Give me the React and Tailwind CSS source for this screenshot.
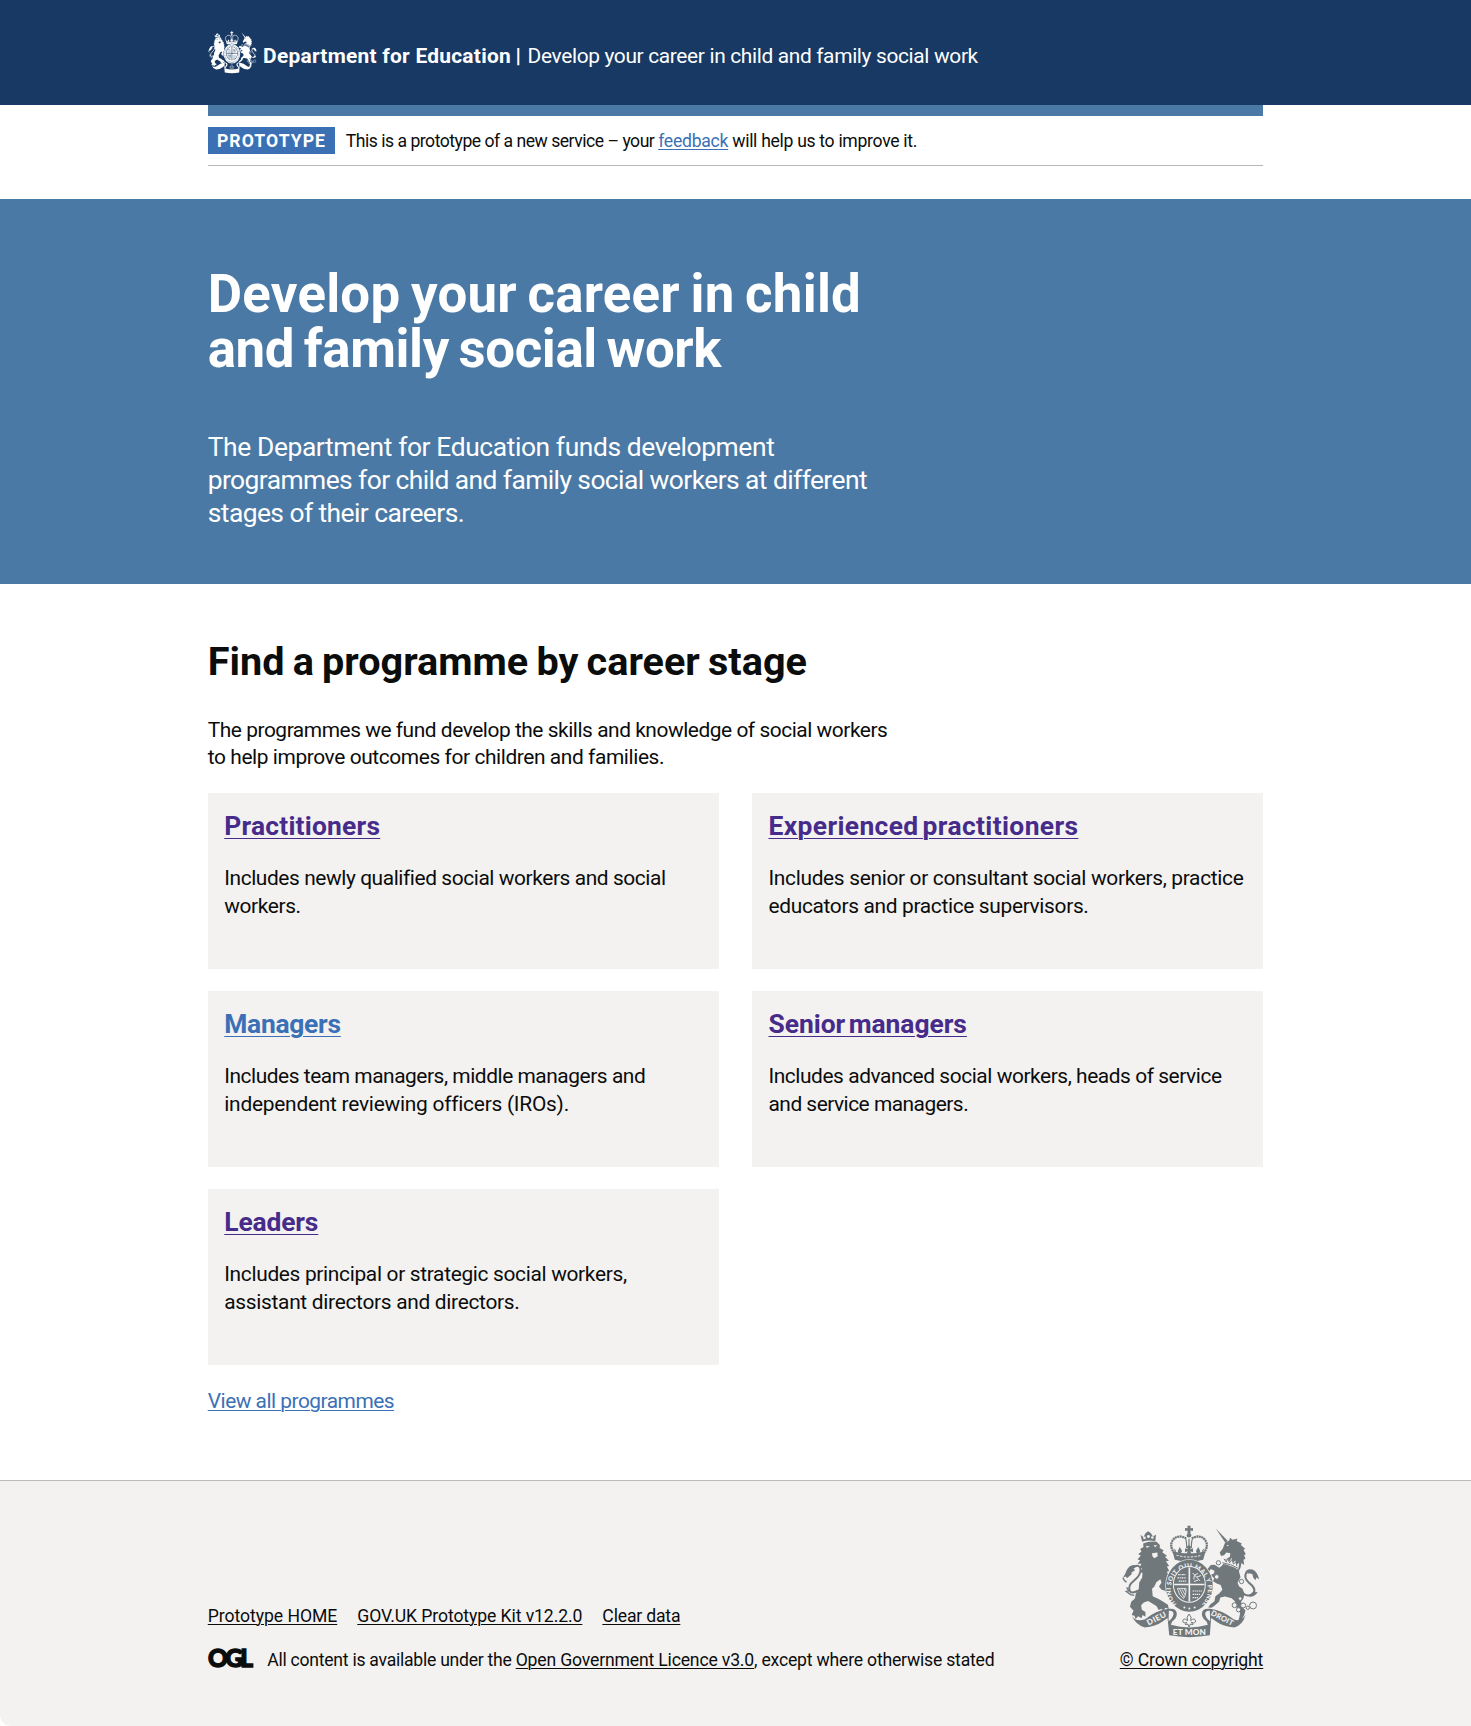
import React from 'react';

const garterText = { fontFamily: 'Lato, sans-serif', fontWeight: 900 };

function Crest({ className, ink, paper, lettering = true, id }) {
  const line = { fill: 'none', stroke: ink };
  return (
    <svg viewBox="66 42 418 344" preserveAspectRatio="none" className={className} fill={ink} aria-hidden="true">
      {/* lion */}
      <path d="M127 93 L122 72 L131 79 L137 67 L145 61 L153 66 L160 77 L169 71 L167 91 Q147 86 127 93Z" />
      <g fill={paper}>
        <circle cx="134" cy="81" r="4" /><circle cx="146" cy="77" r="4.5" /><circle cx="158" cy="80" r="4" />
      </g>
      <path d="M130 98 Q148 90 171 93 L181 104 L180 112 L192 119 L188 125 L203 136 L196 139 L208 151 L199 152 L209 167 L202 168 L209 182 L202 184 L206 193 Q213 200 212 208 L218 217 L205 216 L207 226 L216 232 L213 241 L224 249 L232 262 L222 261 L225 272 L207 262 Q201 255 198 243 L185 238 L178 229 L186 217 L182 207 L170 216 L164 229 L157 236 L159 259 L177 267 L191 276 L205 285 L208 298 L197 294 L193 303 L185 298 L177 301 L171 289 L153 278 L145 273 L132 278 L124 286 L126 300 L137 307 L137 321 L128 316 L125 326 L115 320 L107 328 L104 318 L95 316 L101 303 L90 291 L94 276 L105 266 L108 250 L117 235 L118 218 L127 202 L128 188 L122 185 L127 173 L118 173 L125 160 L113 160 L121 149 L113 147 L123 135 L115 131 L125 123 L121 115 L131 109Z" />
      <path d="M157 128 L173 126 L174 137 L164 143 L158 137Z M139 105 L151 108 L140 111Z M162 104 L173 104 L166 110Z" fill={paper} />
      <path d="M114 242 Q94 254 89 241 Q84 226 102 212 Q124 193 122 176 Q118 160 103 170 Q86 178 79 197" strokeWidth="6" {...line} />
      <path d="M69 202 Q76 193 80 180 Q88 163 107 164 L100 175 L106 179 L94 187 L96 191 L81 204 L78 199Z" />
      <path d="M69 202 Q72 213 80 216 M80 232 L87 243 L79 244 L92 254 L103 256" strokeWidth="4" {...line} />

      {/* unicorn */}
      <path d="M350 53 L386 90 L379 96Z" />
      <path d="M378 96 L391 89 L393 81 L401 87 L416 83 L413 91 L429 98 L426 103 L439 114 L434 118 L441 130 L436 134 L440 145 L434 148 L436 164 L428 158 L425 172 L420 182 L425 201 L416 218 L421 229 L431 236 L437 251 L434 265 L427 276 L429 290 L440 302 L436 316 L427 332 L419 345 L407 352 L410 342 L420 329 L424 310 L412 292 L408 274 L398 265 L378 260 L364 263 L360 276 L346 288 L337 294 L327 293 L333 284 L346 274 L349 259 L362 249 L370 239 L365 225 L353 220 L342 213 L345 204 L335 194 L345 189 L346 181 L335 176 L330 184 L323 178 L335 164 L346 163 L361 172 L371 164 L374 150 L393 139 L394 128 L382 126 L375 134 L366 136 L362 126 L371 114Z" />
      <path d="M383 103 L390 103 L386 107Z" fill={paper} />
      <path d="M374 142 L381 151 L385 139 L391 153 L398 142 L402 156 L410 150 L412 163 L421 158 L418 178 Q395 164 369 160Z" fill={paper} />
      <path d="M370 157 Q396 160 418 174 M375 145 L382 155 L386 144 L392 157 L399 147 L404 161 L411 154 L414 167" strokeWidth="3" {...line} />
      <path d="M431 248 Q448 266 466 247 Q471 234 452 219 Q433 203 443 185 Q456 170 473 199" strokeWidth="6" {...line} />
      <path d="M444 190 Q450 176 463 178 Q477 185 481 207 L472 202 L471 210 L464 203 L461 192 L455 190Z M450 260 Q468 262 477 246 L470 247 L468 239 L458 251Z" />
      <g fill={paper} stroke={ink} strokeWidth="3">
        <circle cx="358" cy="157" r="6.5" /><circle cx="353" cy="200" r="7" /><circle cx="428" cy="214" r="6.5" />
        <circle cx="424" cy="266" r="5.5" /><circle cx="407" cy="286" r="7.5" /><circle cx="419" cy="300" r="6.5" />
        <circle cx="433" cy="287" r="7.5" /><circle cx="447" cy="294" r="5" /><circle cx="463" cy="287" r="10.5" />
      </g>

      {/* ribbon */}
      <path d="M96 319 Q108 338 136 329 Q170 301 207 297 Q232 294 232 313 Q232 326 218 336 L214 346 Q270 362 326 346 L322 336 Q308 326 308 313 Q308 294 333 297 Q370 301 404 329 Q426 338 440 316 Q432 347 406 354 Q373 352 350 335 L336 325 L332 378 Q270 389 209 378 L204 325 L190 335 Q167 352 135 354 Q108 346 96 319Z" />
      <path d="M208 303 Q223 302 222 314 Q219 328 207 335Z M332 303 Q317 302 318 314 Q321 328 333 335Z" fill={paper} />
      {lettering && (
        <g fill={paper} style={garterText} textAnchor="middle">
          <text transform="translate(174 334) rotate(-27)" fontSize="24" textLength="62">DIEU</text>
          <text x="270" y="377" fontSize="25" textLength="100">ET MON</text>
          <text transform="translate(366 332) rotate(27)" fontSize="23" textLength="74">DROIT</text>
        </g>
      )}
      <path d="M269 313 Q259 323 265 333 Q252 323 250 334 Q252 344 262 338 L258 345 L266 344 L269 353 L273 344 L281 345 L276 338 Q287 344 289 334 Q286 323 274 333 Q279 323 269 313Z" fill={paper} stroke={ink} strokeWidth="3" />

      {/* crown */}
      <path d="M264 44 h10 l-1 8 8 -1 v9 l-8 -1 1 8 h-10 l1 -8 -8 1 v-9 l8 1Z" />
      <circle cx="269" cy="73" r="7" />
      <path d="M225 128 Q208 106 220 88 Q234 69 262 83 M313 128 Q330 106 318 88 Q304 69 276 83" strokeWidth="7" strokeDasharray="6 1.5" {...line} />
      <path d="M258 82 Q262 90 262 112 M280 82 Q276 90 276 112 M269 84 V108" strokeWidth="3.5" {...line} />
      <path d="M262 109 l7 -6 7 6 -3 7 8 -3 v12 l-8 -3 3 8 h-14 l3 -8 -8 3 v-12 l8 3Z M235 121 l6 -12 7 12 -4 8 h-7Z M290 121 l7 -12 6 12 -3 8 h-7Z M222 113 l7 6 v10Z M316 113 l-7 6 v10Z" />
      <path d="M219 122 Q269 136 319 122 L312 148 Q269 160 226 148Z" />
      <path d="M231 134 Q269 145 307 134" fill="none" stroke={paper} strokeWidth="3" strokeDasharray="7 4" />

      {/* garter and shield */}
      <ellipse cx="270" cy="227" rx="73" ry="81" fill={paper} />
      <ellipse cx="270" cy="227" rx="71" ry="79" />
      <path id={id} d="M231 284 A56 65 0 1 1 309 284" fill="none" />
      {lettering ? (
        <text fill={paper} style={garterText} fontSize="19">
          <textPath href={`#${id}`} textLength="292">HONI SOIT QUI MAL Y PENSE</textPath>
        </text>
      ) : (
        <ellipse cx="270" cy="227" rx="60" ry="68" fill="none" stroke={paper} strokeWidth="4" strokeDasharray="7 6" />
      )}
      <g fill={paper}>
        <circle cx="255" cy="293" r="3" /><circle cx="270" cy="296" r="3" /><circle cx="286" cy="293" r="3" />
      </g>
      <ellipse cx="270" cy="223" rx="50" ry="56" fill={paper} />
      <ellipse cx="270" cy="223" rx="47" ry="53" />
      <path d="M270 171 V275 M224 223 H316" stroke={paper} strokeWidth="5" />
      <path d="M236 193 h24 M234 203 h26 M238 213 h22 M280 243 h28 M280 253 h24 M280 263 h16" stroke={paper} strokeWidth="3.5" strokeDasharray="5 2 3 2" />
      <path d="M280 188 L302 212 M284 208 Q282 192 296 190 M293 200 l12 -4 M284 214 l12 -4" fill="none" stroke={paper} strokeWidth="3" />
      <path d="M234 235 H260 Q260 258 252 266 Q238 256 234 235Z M240 236 L254 262 M247 236 L257 255 M254 236 L259 245" fill="none" stroke={paper} strokeWidth="2.5" />
    </svg>
  );
}

function Link({ children, className = '' }) {
  return (
    <a href="#" className={`underline decoration-1 underline-offset-[0.1em] ${className}`}>
      {children}
    </a>
  );
}

const visited = 'text-[#472b8a]';
const blue = 'text-[#3b70b6]';

const cards = [
  { title: 'Practitioners', tone: visited, track: 'tracking-[0.22px]', lines: [['Includes newly qualified social workers and social', 'tracking-[-0.41px]'], ['workers.', 'tracking-[-0.39px]']] },
  { title: 'Experienced practitioners', tone: visited, track: 'tracking-[0.38px] [word-spacing:-3px]', lines: [['Includes senior or consultant social workers, practice', 'tracking-[-0.32px]'], ['educators and practice supervisors.', 'tracking-[-0.33px]']] },
  { title: 'Managers', tone: blue, track: 'tracking-[-0.27px]', lines: [['Includes team managers, middle managers and', 'tracking-[-0.45px]'], ['independent reviewing officers (IROs).', 'tracking-[-0.24px]']] },
  { title: 'Senior managers', tone: visited, track: 'tracking-[-0.03px] [word-spacing:-3px]', lines: [['Includes advanced social workers, heads of service', 'tracking-[-0.43px]'], ['and service managers.', 'tracking-[-0.5px]']] },
  { title: 'Leaders', tone: visited, track: 'tracking-[-0.14px]', lines: [['Includes principal or strategic social workers,', 'tracking-[-0.32px]'], ['assistant directors and directors.', 'tracking-[-0.30px]']] },
];

function Card({ title, tone, track, lines }) {
  return (
    <div className="h-[175.6px] bg-[#f3f2f1] px-[16.5px] pt-[16.5px]">
      <h3 className={`text-[26.4px] leading-[33px] font-bold ${track}`}>
        <Link className={tone}>{title}</Link>
      </h3>
      <p className="mt-[22.4px] text-[20.9px] leading-[27.5px] whitespace-nowrap">
        {lines.map(([text, spacing]) => (
          <span key={text} className={`block ${spacing}`}>{text}</span>
        ))}
      </p>
    </div>
  );
}

export default function App() {
  return (
    <div className="min-h-[1726px] w-full bg-white font-['Roboto',sans-serif] text-[#0b0c0c]">
      <header className="h-[104.7px] bg-[#173963] text-white">
        <div className="mx-auto flex w-[1055.5px] pt-[31px]">
          <Crest id="garter-header" className="h-[42.5px] w-[49px]" ink="#ffffff" paper="#173963" lettering={false} />
          <div className="ml-[6.3px] flex pt-[12px] text-[20.9px] leading-[27.5px] whitespace-nowrap">
            <span className="w-[252.5px] font-bold tracking-[0.26px]">Department for Education</span>
            <span className="w-[12px] font-black">|</span>
            <span className="tracking-[-0.34px]">Develop your career in child and family social work</span>
          </div>
        </div>
      </header>

      <div className="mx-auto h-[94.6px] w-[1055.5px]">
        <div className="h-[11px] bg-[#4b79a5]" />
        <div className="flex h-[50.3px] items-start border-b border-[#b4b8bb] pt-[11px] text-[17.6px]">
          <strong className="flex h-[27.4px] w-[127.5px] items-center justify-center bg-[#3b70b5] pt-px font-bold tracking-[1.05px] text-white">PROTOTYPE</strong>
          <p className="ml-[10.5px] pt-[3px] leading-[22px] whitespace-nowrap">
            <span className="tracking-[-0.49px]">This is a prototype of a new service – your </span>
            <Link className="tracking-[-0.26px] text-[#3b70b6]">feedback</Link>
            <span className="tracking-[-0.31px]"> will help us to improve it.</span>
          </p>
        </div>
      </div>

      <section className="h-[384.8px] bg-[#4b79a5] text-white">
        <div className="mx-auto w-[1055.5px] pt-[68px] whitespace-nowrap">
          <h1 className="text-[52.8px] leading-[55px] font-bold">
            <span className="block tracking-[0.25px] [word-spacing:-2.8px]">Develop your career in child</span>
            <span className="block tracking-[-0.4px] [word-spacing:-3px]">and family social work</span>
          </h1>
          <p className="mt-[54px] text-[26.4px] leading-[33px]">
            <span className="block tracking-[-0.4px]">The Department for Education funds development</span>
            <span className="block tracking-[-0.57px]">programmes for child and family social workers at different</span>
            <span className="block tracking-[-0.56px]">stages of their careers.</span>
          </p>
        </div>
      </section>

      <main className="mx-auto h-[896.2px] w-[1055.5px] pt-[56.4px]">
        <h2 className="text-[39.6px] leading-[44px] font-bold tracking-[0px] [word-spacing:-1.6px]">Find a programme by career stage</h2>
        <p className="mt-[32.3px] text-[20.9px] leading-[27.5px] whitespace-nowrap">
          <span className="block tracking-[-0.45px]">The programmes we fund develop the skills and knowledge of social workers</span>
          <span className="block tracking-[-0.4px]">to help improve outcomes for children and families.</span>
        </p>
        <div className="mt-[21.5px] grid grid-cols-2 gap-x-[33px] gap-y-[22.4px]">
          {cards.map((card) => <Card key={card.title} {...card} />)}
        </div>
        <p className="mt-[22.8px] text-[20.9px] leading-[27.5px] tracking-[-0.5px]">
          <Link className="text-[#3b70b6]">View all programmes</Link>
        </p>
      </main>

      <footer className="h-[245.7px] rounded-bl-[11px] border-t border-[#b9bbbc] bg-[#f3f2f1]">
        <div className="mx-auto flex w-[1055.5px] items-end justify-between pt-[43.5px] text-[17.6px] leading-[22px] whitespace-nowrap">
          <div>
            <div className="flex gap-[20px]">
              <Link className="tracking-[-0.05px]">Prototype HOME</Link>
              <Link className="tracking-[-0.09px]">GOV.UK Prototype Kit v12.2.0</Link>
              <Link className="tracking-[-0.18px]">Clear data</Link>
            </div>
            <div className="mt-[22px] flex">
              <svg viewBox="0 0 45 20" className="h-[20px] w-[45px] overflow-visible" aria-label="Open Government Licence">
                <text x="0" y="18.2" textLength="45" lengthAdjust="spacing" fontSize="24.5" fontWeight="900" fill="#0b0c0c" stroke="#0b0c0c" strokeWidth="1.3" style={{ fontFamily: 'Lato, sans-serif' }}>OGL</text>
              </svg>
              <p className="ml-[14.5px]">
                <span className="tracking-[-0.26px]">All content is available under the </span>
                <Link className="tracking-[-0.17px]">Open Government Licence v3.0</Link>
                <span className="tracking-[-0.2px]">, except where otherwise stated</span>
              </p>
            </div>
          </div>
          <div className="flex flex-col items-end">
            <Crest id="garter-footer" className="mr-[3px] h-[113px] w-[138px]" ink="#70787c" paper="#f3f2f1" />
            <Link className="mt-[11px] tracking-[-0.13px]">© Crown copyright</Link>
          </div>
        </div>
      </footer>
    </div>
  );
}
